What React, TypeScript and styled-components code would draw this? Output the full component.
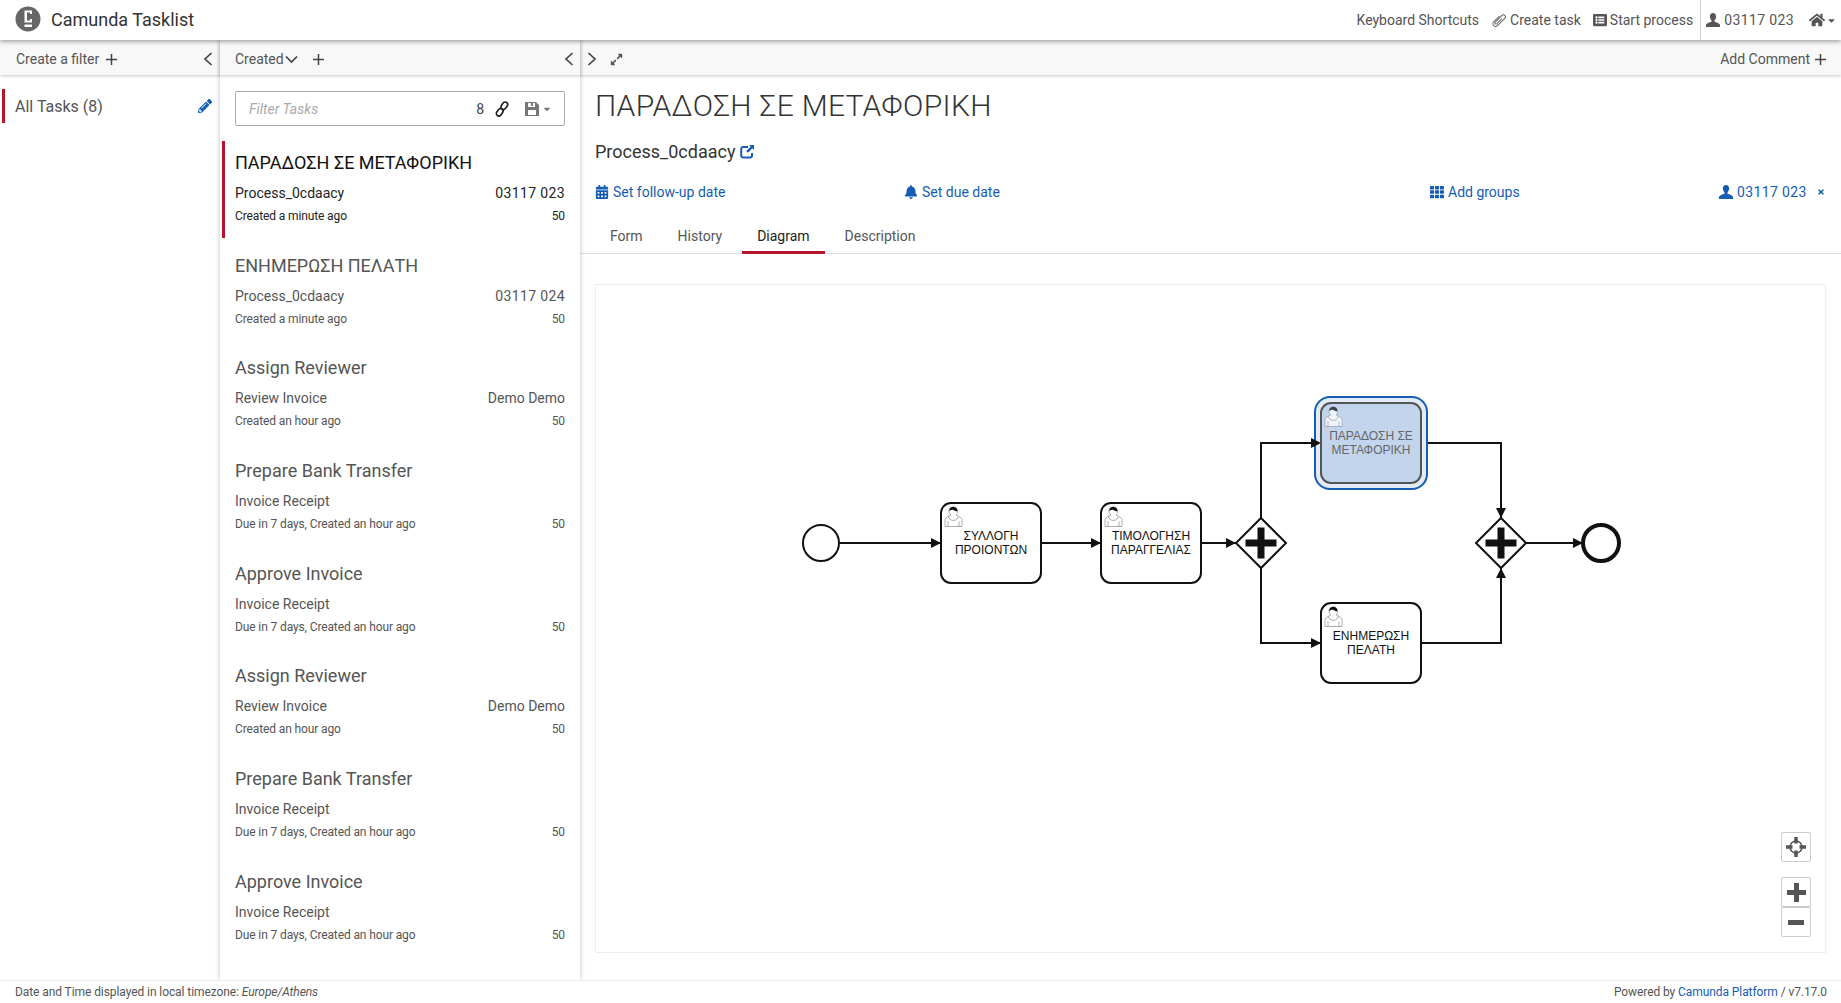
import React from "react";
import styled, { createGlobalStyle } from "styled-components";
import {
  FaHome, FaBell, FaCalendarAlt, FaTh, FaPencilAlt, FaExpandAlt, FaTimes, FaCaretDown, FaListAlt,
} from "react-icons/fa";

const Global = createGlobalStyle`
  html, body, #root { height: 100%; margin: 0; }
  body { font-family: Roboto, "Liberation Sans", sans-serif; font-size: 14px; color: #444; background: #fff; overflow: hidden; }
  * { box-sizing: border-box; }
`;

const Page = styled.div`display:flex;flex-direction:column;height:1003px;`;
const Header = styled.header`
  height:40px;flex:none;display:flex;align-items:center;justify-content:space-between;
  padding-left:15px;background:#fff;box-shadow:0 1px 5px rgba(0,0,0,.45);position:relative;z-index:5;
`;
const Brand = styled.div`display:flex;align-items:center;gap:10px;font-size:18px;color:#333;padding-bottom:2px;`;
const Logo = styled.svg`width:26px;height:26px;`;
const Nav = styled.nav`display:flex;align-items:center;height:100%;color:#555;font-size:14px;`;
const NavItem = styled.span`display:inline-flex;align-items:center;gap:3px;margin-right:12px;white-space:nowrap;`;
const NavUser = styled.span`
  display:inline-flex;align-items:center;gap:4px;height:100%;border-left:1px solid #ccc;padding-left:5px;white-space:nowrap;
  margin-left:-5px;
`;
const NavHome = styled.span`display:inline-flex;align-items:center;gap:1px;margin-left:15px;margin-right:4px;`;
const Digits = styled.span`letter-spacing:.38px;`;

const Body = styled.div`flex:1;display:flex;min-height:0;`;
const FilterCol = styled.aside`width:220px;flex:none;display:flex;flex-direction:column;`;
const ListCol = styled.section`
  width:360px;flex:none;display:flex;flex-direction:column;position:relative;z-index:2;
  box-shadow:0 0 5px rgba(0,0,0,.25);
`;
const DetailCol = styled.main`flex:1;display:flex;flex-direction:column;min-width:0;`;
const Bar = styled.div<{ $pad?: number; $left?: number }>`
  height:35px;flex:none;display:flex;align-items:center;justify-content:space-between;background:#f8f8f8;
  color:#555;box-shadow:0 1px 3px rgba(0,0,0,.22);position:relative;padding:3px ${p=>p.$pad ?? 12}px 0 ${p=>p.$left ?? 15}px;
`;
const BarGroup = styled.span<{ $gap?: number }>`display:inline-flex;align-items:center;gap:${p=>p.$gap ?? 5}px;`;
const FilterItem = styled.div`
  margin:14px 0 0 2px;height:34px;border-left:3px solid #b5152b;display:flex;align-items:center;justify-content:space-between;
  padding:0 8px 0 10px;font-size:16px;color:#555;
`;
const Blue = styled.span`color:#155cb5;display:inline-flex;align-items:center;gap:4px;white-space:nowrap;`;
const Search = styled.div`
  margin:16px 15px 15px;height:35px;border:1px solid #aaa;border-radius:2px;display:flex;align-items:center;
  padding:0 12px 0 13px;color:#444;flex:none;
`;
const SearchLabel = styled.span`flex:1;font-style:italic;color:#aaa;`;
const SearchIcons = styled.span`display:inline-flex;align-items:center;gap:11px;`;
const SaveIcon = styled.span`display:inline-flex;align-items:center;gap:3px;margin-left:16px;color:#777;`;
const Tasks = styled.div`flex:1;overflow:hidden;`;
const Task = styled.article<{ $active?: boolean }>`
  height:97px;margin:0 0 5.7px ${p=>p.$active?"2px":"0"};padding:${p=>p.$active?"11px 15px 0 10px":"11px 15px 0 15px"};
  ${p=>p.$active?"border-left:3px solid #b5152b;color:#222;":"color:#555;"}
`;
const TaskName = styled.h4<{ $active?: boolean }>`margin:0;font-size:18px;font-weight:400;line-height:22px;color:${p=>p.$active?"#111":"#555"};`;
const TaskRow = styled.div`display:flex;justify-content:space-between;margin-top:9px;line-height:20px;`;
const TaskMeta = styled.div`display:flex;justify-content:space-between;margin-top:3px;font-size:12px;line-height:20px;letter-spacing:-.12px;`;

const Detail = styled.div`flex:1;display:flex;flex-direction:column;min-height:0;`;
const Head = styled.div`padding-left:15px;flex:none;`;
const Title = styled.h2`margin:13px 0 0;font-size:30px;font-weight:300;line-height:36px;color:#333;letter-spacing:.35px;`;
const SubTitle = styled.div`margin:16px 0 0;font-size:18px;line-height:24px;color:#333;display:flex;align-items:center;gap:5px;`;
const Actions = styled.div`display:grid;grid-template-columns:309px 526px 289px 1fr;margin:18px 0 0;padding-right:16px;line-height:20px;`;
const RightCell = styled.span`display:flex;justify-content:space-between;`;
const Tabs = styled.div`display:flex;margin:17px 0 0 -15px;height:35px;border-bottom:1px solid #ddd;padding-left:15px;`;
const Tab = styled.div<{ $on?: boolean }>`
  padding:0 15px;margin-right:5px;line-height:34px;height:35px;color:${p=>p.$on?"#222":"#555"};
  ${p=>p.$on?"border-bottom:3px solid #b5152b;":""}
`;
const Canvas = styled.div`
  flex:1;margin:30px 15px 27px 15px;border:1px solid #eee;position:relative;min-height:0;
`;
const Diagram = styled.svg`display:block;width:100%;height:100%;`;
const Zoom = styled.div`position:absolute;right:14px;bottom:15px;display:flex;flex-direction:column;gap:15px;`;
const ZoomGroup = styled.div`display:flex;flex-direction:column;`;
const ZoomBtn = styled.div`
  width:30px;height:30px;display:flex;align-items:center;justify-content:center;border:1px solid #ccc;border-radius:2px;background:#fff;color:#555;
`;
const Footer = styled.footer`
  height:23px;flex:none;display:flex;justify-content:space-between;align-items:center;border-top:1px solid #eee;
  padding:0 14px 0 15px;font-size:12px;color:#555;background:#fff;position:relative;z-index:3;letter-spacing:-.08px;
`;
const FootLink = styled.span`color:#155cb5;`;

/* Small glyphs drawn to follow the reference's icon font */
const Chevron = ({ dir }: { dir: "left" | "right" }) => (
  <svg width="10" height="14" viewBox="0 0 10 14" aria-hidden>
    <path d={dir === "left" ? "M8.5 1L2 7l6.5 6" : "M1.5 1L8 7l-6.5 6"} fill="none" stroke="#444" strokeWidth="1.7" />
  </svg>
);
const ChevronDown = () => (
  <svg width="13" height="9" viewBox="0 0 13 9" aria-hidden>
    <path d="M1 1.5l5.500 5.500L12 1.500" fill="none" stroke="#444" strokeWidth="1.7" />
  </svg>
);
const Plus = () => (
  <svg width="11" height="11" viewBox="0 0 11 11" aria-hidden>
    <path d="M5.500 0v11M0 5.500h11" stroke="#444" strokeWidth="1.5" />
  </svg>
);
const Person = ({ size, color }: { size: number; color: string }) => (
  <svg width={size} height={size} viewBox="0 0 14 14" aria-hidden>
    <path d="M7 0c2 0 3.100 1.500 3.100 3.600 0 1.600-.8 3.200-1.600 3.900v1.200c1.600.6 5.500 1.600 5.500 3.300V14H0v-2c0-1.700 3.900-2.700 5.500-3.300V7.500C4.700 6.800 3.900 5.200 3.900 3.600 3.900 1.500 5 0 7 0z" fill={color} />
  </svg>
);
const Clip = () => (
  <svg width="16" height="16" viewBox="0 0 16 16" aria-hidden>
    <g transform="rotate(45 8 8)" fill="none" stroke="#666" strokeWidth="1">
      <path d="M5.500 5v8a2.700 2.700 0 0 0 5.400 0V2.700a2 2 0 0 0-4 0v9.500a1.100 1.100 0 0 0 2.200 0V5" />
    </g>
  </svg>
);
const Chain = () => (
  <svg width="14" height="16" viewBox="0 0 14 16" aria-hidden>
    <g transform="rotate(35 7 8)" fill="none" stroke="#222" strokeWidth="1.7">
      <rect x="4.500" y="0" width="5" height="8" rx="2.500" />
      <rect x="4.500" y="8" width="5" height="8" rx="2.500" />
    </g>
  </svg>
);
const Floppy = () => (
  <svg width="14" height="14" viewBox="0 0 14 14" aria-hidden>
    <path d="M0 0h11l3 3v11H0zM3 1v4h7V1H8v3H6V1zM3 8v5h8V8z" fill="#777" fillRule="evenodd" />
  </svg>
);
const ShareBox = () => (
  <svg width="14" height="14" viewBox="0 0 14 14" aria-hidden>
    <path d="M8 2H3.500A2 2 0 0 0 1.200 4v6.500a2 2 0 0 0 2.300 2H10a2 2 0 0 0 2-2V8" fill="none" stroke="#155cb5" strokeWidth="2" />
    <path d="M9 0h5v5l-1.700-1.700L8 7.800 6.200 6l4.500-4.300z" fill="#155cb5" />
  </svg>
);
const Target = () => (
  <svg width="20" height="20" viewBox="0 0 20 20" aria-hidden>
    <circle cx="10" cy="10" r="6" fill="none" stroke="#555" strokeWidth="1.5" />
    <path d="M10 0v6.500M10 13.500V20M0 10h6.500M13.500 10H20" stroke="#555" strokeWidth="3.5" />
  </svg>
);
const BigPlus = () => (
  <svg width="19" height="19" viewBox="0 0 19 19" aria-hidden>
    <path d="M9.500 0v19M0 9.500h19" stroke="#555" strokeWidth="5" />
  </svg>
);
const BigMinus = () => (
  <svg width="16" height="5" viewBox="0 0 16 5" aria-hidden>
    <rect width="16" height="5" fill="#555" />
  </svg>
);

const tasks = [
  ["ΠΑΡΑΔΟΣΗ ΣΕ ΜΕΤΑΦΟΡΙΚΗ","Process_0cdaacy","03117 023","Created a minute ago"],
  ["ΕΝΗΜΕΡΩΣΗ ΠΕΛΑΤΗ","Process_0cdaacy","03117 024","Created a minute ago"],
  ["Assign Reviewer","Review Invoice","Demo Demo","Created an hour ago"],
  ["Prepare Bank Transfer","Invoice Receipt","","Due in 7 days, Created an hour ago"],
  ["Approve Invoice","Invoice Receipt","","Due in 7 days, Created an hour ago"],
  ["Assign Reviewer","Review Invoice","Demo Demo","Created an hour ago"],
  ["Prepare Bank Transfer","Invoice Receipt","","Due in 7 days, Created an hour ago"],
  ["Approve Invoice","Invoice Receipt","","Due in 7 days, Created an hour ago"],
];

// Canvas inner origin in page coords
const OX = 596, OY = 285;

function UserTask({ x, y, lines, selected }: { x:number; y:number; lines:string[]; selected?:boolean }) {
  const tx = x - OX, ty = y - OY;
  return (
    <g>
      {selected && <rect x={tx-6} y={ty-6} width={112} height={92} rx={15} fill="#e3ebf6" stroke="#155cb5" strokeWidth={2} />}
      <rect x={tx} y={ty} width={100} height={80} rx={10} fill={selected?"#c3d5ec":"#fff"} stroke={selected?"#555":"#111"} strokeWidth={2} />
      <g transform={`translate(${tx},${ty})`} opacity={selected?0.75:1}>
        <path d="m 15,12 c 0.909,-0.845 1.594,-2.049 1.594,-3.385 0,-2.554 -1.805,-4.622 -4.357,-4.622 -2.552,0 -4.288,2.068 -4.288,4.622 0,1.348 0.974,2.562 1.896,3.405 -0.529,0.187 -5.669,2.097 -5.794,4.756 v 6.718 h 17 v -6.718 c 0,-2.298 -5.528,-4.595 -6.051,-4.776 z m -8,6 l 0,5.5 m 11,0 l 0,-5" fill="#fff" stroke="#777" strokeWidth={0.6} />
        <path d="m 15,12 m 2.162,1.009 c 0,2.447 -2.158,4.431 -4.821,4.431 -2.665,0 -4.822,-1.981 -4.822,-4.431" fill="#fff" stroke="#777" strokeWidth={0.6} />
        <path d="m 15,12 m -6.9,-3.8 c 0,0 2.251,-2.358 4.274,-1.177 2.024,1.181 4.221,1.537 4.124,0.965 -0.098,-0.57 -0.117,-3.791 -4.191,-4.136 -3.575,0.001 -4.208,3.367 -4.207,4.348 z" fill="#111" />
      </g>
      <text textAnchor="middle" fontFamily="'Liberation Sans', Arial, sans-serif" fontSize={12} fill={selected?"#666":"#111"}>
        {lines.map((l,i)=>(<tspan key={l} x={tx+50} y={ty+37+i*14}>{l}</tspan>))}
      </text>
    </g>
  );
}

function Gateway({ x, y }: { x:number; y:number }) {
  const cx=x-OX, cy=y-OY;
  return (
    <g>
      <polygon points={`${cx},${cy-25} ${cx+25},${cy} ${cx},${cy+25} ${cx-25},${cy}`} fill="#fff" stroke="#111" strokeWidth={2} />
      <path d={`M${cx-15.5} ${cy-3.5}h12v-12h7v12h12v7h-12v12h-7v-12h-12z`} fill="#111" />
    </g>
  );
}

function Flow({ d }: { d:string }) {
  return <path d={d} fill="none" stroke="#111" strokeWidth={2} markerEnd="url(#arrow)" transform={`translate(${-OX},${-OY})`} />;
}

export default function App() {
  return (
    <Page>
      <Global />
      <Header>
        <Brand>
          <Logo viewBox="0 0 26 26" aria-hidden>
            <circle cx="13" cy="13" r="12.5" fill="#666" />
            <path d="M9.500 4.500h7.500v3.500H15V6.500h-3v8h3V13h2v3.500H9.500z" fill="#fff" />
            <rect x="9.500" y="18.500" width="7.500" height="2.500" fill="#fff" />
          </Logo>
          Camunda Tasklist
        </Brand>
        <Nav>
          <NavItem>Keyboard Shortcuts</NavItem>
          <NavItem><Clip />Create task</NavItem>
          <NavItem><FaListAlt size={14} />Start process</NavItem>
          <NavUser><Person size={14} color="#555" /><Digits>03117 023</Digits></NavUser>
          <NavHome><FaHome size={16} /><FaCaretDown size={11} /></NavHome>
        </Nav>
      </Header>
      <Body>
        <FilterCol>
          <Bar $left={16} $pad={7}>
            <BarGroup $gap={7}>Create a filter <Plus /></BarGroup>
            <Chevron dir="left" />
          </Bar>
          <FilterItem>All Tasks (8)<Blue><FaPencilAlt size={14} /></Blue></FilterItem>
        </FilterCol>
        <ListCol>
          <Bar $pad={6}>
            <BarGroup $gap={15}>
              <BarGroup $gap={1}>Created<ChevronDown /></BarGroup>
              <Plus />
            </BarGroup>
            <Chevron dir="left" />
          </Bar>
          <Search>
            <SearchLabel>Filter Tasks</SearchLabel>
            <SearchIcons>8<Chain /></SearchIcons>
            <SaveIcon><Floppy /><FaCaretDown size={10} /></SaveIcon>
          </Search>
          <Tasks>
            {tasks.map((t,i)=>(
              <Task key={i} $active={i===0}>
                <TaskName $active={i===0}>{t[0]}</TaskName>
                <TaskRow><span>{t[1]}</span>{i<2 ? <Digits>{t[2]}</Digits> : <span>{t[2]}</span>}</TaskRow>
                <TaskMeta><span>{t[3]}</span><span>50</span></TaskMeta>
              </Task>
            ))}
          </Tasks>
        </ListCol>
        <DetailCol>
          <Bar $left={7} $pad={15}>
            <BarGroup $gap={13}>
              <Chevron dir="right" />
              <FaExpandAlt size={13} />
            </BarGroup>
            <BarGroup>Add Comment <Plus /></BarGroup>
          </Bar>
          <Detail>
            <Head>
              <Title>ΠΑΡΑΔΟΣΗ ΣΕ ΜΕΤΑΦΟΡΙΚΗ</Title>
              <SubTitle>Process_0cdaacy <ShareBox /></SubTitle>
              <Actions>
                <Blue><FaCalendarAlt size={14} />Set follow-up date</Blue>
                <Blue><FaBell size={14} />Set due date</Blue>
                <Blue><FaTh size={14} />Add groups</Blue>
                <RightCell><Blue><Person size={14} color="#155cb5" /><Digits>03117 023</Digits></Blue><Blue><FaTimes size={8} /></Blue></RightCell>
              </Actions>
              <Tabs>
                <Tab>Form</Tab>
                <Tab>History</Tab>
                <Tab $on>Diagram</Tab>
                <Tab>Description</Tab>
              </Tabs>
            </Head>
            <Canvas>
              <Diagram>
                <defs>
                  <marker id="arrow" viewBox="0 0 10 10" refX="10" refY="5" markerWidth="5.5" markerHeight="5" orient="auto">
                    <path d="M0 0L10 5L0 10z" fill="#111" />
                  </marker>
                </defs>
                <circle cx={821-OX} cy={543-OY} r={18} fill="#fff" stroke="#111" strokeWidth={2} />
                <Flow d="M839 543H941" />
                <Flow d="M1041 543H1101" />
                <Flow d="M1201 543H1236" />
                <Flow d="M1421 443H1501V518" />
                <Flow d="M1421 643H1501V568" />
                <Flow d="M1526 543H1583" />
                <path d="M1261 518V443H1321" fill="none" stroke="#111" strokeWidth={2} transform={`translate(${-OX},${-OY})`} />
                <path d="M1261 568V643H1321" fill="none" stroke="#111" strokeWidth={2} markerEnd="url(#arrow)" transform={`translate(${-OX},${-OY})`} />
                <UserTask x={941} y={503} lines={["ΣΥΛΛΟΓΗ","ΠΡΟΙΟΝΤΩΝ"]} />
                <UserTask x={1101} y={503} lines={["ΤΙΜΟΛΟΓΗΣΗ","ΠΑΡΑΓΓΕΛΙΑΣ"]} />
                <UserTask x={1321} y={403} lines={["ΠΑΡΑΔΟΣΗ ΣΕ","ΜΕΤΑΦΟΡΙΚΗ"]} selected />
                <UserTask x={1321} y={603} lines={["ΕΝΗΜΕΡΩΣΗ","ΠΕΛΑΤΗ"]} />
                <path d="M1311 438l10 5l-10 5z" fill="#111" transform={`translate(${-OX},${-OY})`} />
                <Gateway x={1261} y={543} />
                <Gateway x={1501} y={543} />
                <circle cx={1601-OX} cy={543-OY} r={18} fill="#fff" stroke="#111" strokeWidth={4} />
              </Diagram>
              <Zoom>
                <ZoomBtn><Target /></ZoomBtn>
                <ZoomGroup>
                  <ZoomBtn><BigPlus /></ZoomBtn>
                  <ZoomBtn><BigMinus /></ZoomBtn>
                </ZoomGroup>
              </Zoom>
            </Canvas>
          </Detail>
        </DetailCol>
      </Body>
      <Footer>
        <span>Date and Time displayed in local timezone: <em>Europe/Athens</em></span>
        <span>Powered by <FootLink>Camunda Platform</FootLink> / v7.17.0</span>
      </Footer>
    </Page>
  );
}
